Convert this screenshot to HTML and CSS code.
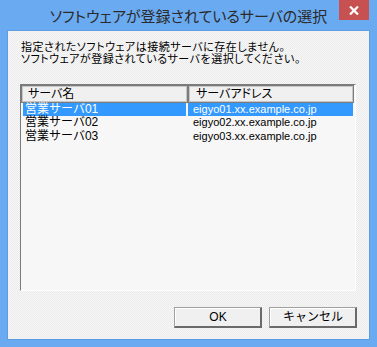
FILE: index.html
```html
<!DOCTYPE html>
<html lang="ja">
<head>
<meta charset="utf-8">
<link rel="stylesheet" href="styles.css">
</head>
<body>
<div class="window">
  <div class="titlebar">
    <div class="spacer"></div>
    <div class="title">ソフトウェアが登録されているサーバの選択</div>
    <div class="close-wrap">
      <div class="close">
        <svg width="10" height="9" viewBox="0 0 10 9"><path d="M1 0.5 L9 8.5 M9 0.5 L1 8.5" stroke="#fff" stroke-width="2.2" fill="none"/></svg>
      </div>
    </div>
  </div>
  <div class="client">
    <div class="message">
      <div class="line">指定されたソフトウェアは接続サーバに存在しません。</div>
      <div class="line">ソフトウェアが登録されているサーバを選択してください。</div>
    </div>
    <div class="listview">
      <div class="header">
        <div class="hcell c1">サーバ名</div>
        <div class="hcell c2">サーバアドレス</div>
      </div>
      <div class="row selected">
        <div class="cell c1">営業サーバ01</div>
        <div class="cell c2">eigyo01.xx.example.co.jp</div>
      </div>
      <div class="row">
        <div class="cell c1">営業サーバ02</div>
        <div class="cell c2">eigyo02.xx.example.co.jp</div>
      </div>
      <div class="row">
        <div class="cell c1">営業サーバ03</div>
        <div class="cell c2">eigyo03.xx.example.co.jp</div>
      </div>
    </div>
    <div class="buttons">
      <button class="btn">OK</button>
      <button class="btn">キャンセル</button>
    </div>
  </div>
</div>
</body>
</html>
```

FILE: styles.css
```css
html, body {
  margin: 0;
  padding: 0;
}
body {
  width: 377px;
  height: 347px;
  overflow: hidden;
  font-family: "Liberation Sans", "Noto Sans CJK JP", sans-serif;
}
.window {
  width: 377px;
  height: 347px;
  background: #6aaaf0;
  display: flex;
  flex-direction: column;
}
.titlebar {
  height: 30px;
  display: grid;
  grid-template-columns: 1fr auto 1fr;
  align-items: start;
}
.title {
  font-family: "Noto Sans CJK JP", sans-serif;
  font-feature-settings: "palt";
  font-size: 15px;
  line-height: 20px;
  padding-top: 6px;
  color: #2b2b2b;
  white-space: nowrap;
}
.close-wrap {
  display: flex;
  justify-content: flex-end;
  padding-right: 8px;
}
.close {
  width: 30px;
  height: 20px;
  background: #c75050;
  display: flex;
  align-items: center;
  justify-content: center;
}
.client {
  margin: 0 7px 7px;
  flex: 1;
  border: 1px solid #5d9de6;
  background: conic-gradient(#ebebeb 25%, #f7f7f7 0 50%, #ebebeb 0 75%, #f7f7f7 0) 0 0 / 2px 2px;
  display: flex;
  flex-direction: column;
}
.message {
  margin: 10px 0 0 13px;
  font-family: "Liberation Sans", "Noto Sans CJK JP", sans-serif;
  font-feature-settings: "palt";
  font-size: 11px;
  color: #000;
  letter-spacing: 0.5px;
  display: flex;
  flex-direction: column;
}
.line {
  height: 12px;
  line-height: 12px;
  white-space: nowrap;
}
.listview {
  margin: 19px 0 0 12px;
  width: 334px;
  height: 205px;
  border: 1px solid;
  border-color: #7a7a7a #ffffff #ffffff #7a7a7a;
  background: #f7f7f7;
}
.header {
  display: flex;
  height: 18px;
}
.hcell {
  box-sizing: border-box;
  height: 18px;
  border: 1px solid #7c7c7c;
  box-shadow: inset 0 0 0 1px #c6c6c6;
  background: #f0f0f0;
  font-size: 12px;
  line-height: 16px;
  padding-left: 6px;
  color: #000;
  font-family: "Liberation Sans", "Noto Sans CJK JP", sans-serif;
  font-feature-settings: "palt";
}
.hcell.c1 {
  width: 167px;
}
.hcell.c2 {
  width: 166px;
  padding-left: 7px;
}
.row {
  display: flex;
  height: 13.4px;
  font-size: 12px;
  line-height: 13px;
  color: #000;
}
.cell.c1 {
  margin-left: 2px;
  width: 163px;
  padding-left: 2px;
  box-sizing: border-box;
}
.cell.c2 {
  margin-left: 2px;
  width: 165px;
  padding-left: 5px;
  box-sizing: border-box;
  font-size: 11px;
}
.row.selected .cell {
  background: #3399ff;
  color: #fff;
}
.buttons {
  display: flex;
  justify-content: flex-end;
  gap: 7px;
  margin: 16px 12px 0 0;
}
.btn {
  box-sizing: border-box;
  width: 88px;
  height: 21px;
  margin: 0;
  padding: 0;
  border: 1px solid;
  border-color: #a0a0a0 #6a6a6a #6a6a6a #a0a0a0;
  box-shadow: inset -1px -1px 0 #6a6a6a, inset 1px 1px 0 #ffffff;
  background: #f0f0f0;
  font-family: "Liberation Sans", "Noto Sans CJK JP", sans-serif;
  font-size: 12px;
  line-height: 17px;
  color: #000;
}
```
